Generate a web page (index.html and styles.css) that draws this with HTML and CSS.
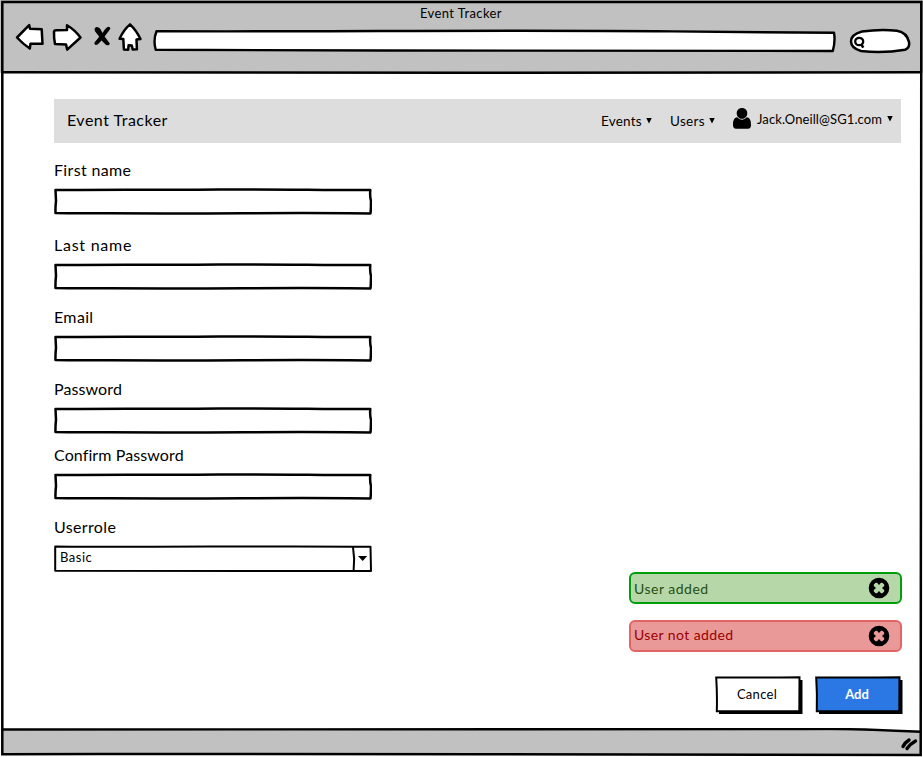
FILE: index.html
```
<!DOCTYPE html>
<html lang="en">
<head>
<meta charset="utf-8">
<title>Event Tracker</title>
<link rel="stylesheet" href="styles.css">
</head>
<body>
<svg class="defs" aria-hidden="true">
  <symbol id="box" viewBox="0 0 318 27">
    <path d="M1.5 2 C60 1.2 110 2 165 1.5 S270 2.2 316.3 2 Q315.7 8 317 13 Q317 20 316.5 25.5 C250 24.4 180 25.6 110 25.4 S40 25.5 1.5 25 Q1.3 19 2 13Z" fill="#fff" stroke="#000" stroke-width="2.5" stroke-linejoin="round"/>
  </symbol>
  <symbol id="close" viewBox="0 0 22 22">
    <path fill="#000" fill-rule="evenodd" d="M11 .7a10.3 10.3 0 1 0 0 20.6a10.3 10.3 0 1 0 0-20.6ZM7.6 5.8 5.8 7.6V9L8 11 5.8 13v1.5l1.8 1.8H9L11 14l2 2.3h1.4l1.8-1.8V13L14 11l2.2-2V7.6l-1.8-1.8H13L11 8 9 5.8Z"/>
  </symbol>
</svg>
<div class="window">
  <header class="chrome">
    <div class="title"><span>Event Tracker</span></div>
    <div class="toolbar">
      <svg class="controls" viewBox="0 0 130 32" width="130" height="32">
        <g fill="#fff" stroke="#000" stroke-width="2.5" stroke-linejoin="round">
          <path d="M2 15.5 14.2 3.2 15 6.8 26.7 7.3 27.5 21.7 15.5 21.7 14.8 26.5Q8 22 2 15.5Z"/>
          <path d="M39 9.5Q39.3 8 42 8.3L52 8V3.2Q60 8 65.5 15.5L52.2 27.7 51 22.4 40 22Q38.8 16 39 9.5Z"/>
          <path d="M115 2.4Q121 8 125.5 17L121.5 17.6 121.9 27.2 117.7 27.6 116.8 23.5 113.6 23.2 113.2 27.8 108.9 27.5 108.3 17 104.6 16.8Q108.5 8 115 2.4Z"/>
        </g>
        <path d="M79.8 6.2Q82 3.5 85 6.5L87.6 11Q91 5 93.5 4.8 96.7 5.5 94.3 8.3L89.6 14.5 94.8 21.4Q94 24.6 90.5 22.4L86.6 18.4 82.6 22.6Q78.7 23.8 79.5 20.5L84.2 14.7 80.2 9.5Q79 7.6 79.8 6.2Z"/>
      </svg>
      <svg class="address" viewBox="0 0 684 26" width="684" height="26">
        <path d="M4.5 3.2C180 4 350 1.5 520 3.4L682 4.8Q683.5 13 680.8 23L230 22.5 3.7 21.8Q1 12 4.5 3.2Z" fill="#fff" stroke="#000" stroke-width="2.4" stroke-linejoin="round"/>
      </svg>
      <svg class="search" viewBox="0 0 62 28" width="62" height="28">
        <path d="M13 4.5Q31 1.8 48 3.7 58 5.5 60 15 61 21 56 22.7 34 26.5 12 24 2 21 2 14.5 2 7.5 13 4.5Z" fill="#fff" stroke="#000" stroke-width="2.5"/>
        <ellipse cx="10.2" cy="14.5" rx="4" ry="3.7" fill="none" stroke="#000" stroke-width="2.3"/>
        <path d="m12 17 2.3 3.6" stroke="#000" stroke-width="2.6"/>
      </svg>
    </div>
  </header>

  <main class="page">
    <nav class="navbar">
      <span class="brand">Event Tracker</span>
      <span class="menu events">Events</span><i class="caret"></i>
      <span class="menu users">Users</span><i class="caret"></i>
      <svg class="person" viewBox="0 0 18 21" width="18" height="21"><path d="M9 0C6 0 3.7 2.2 3.7 5.2S6 10.8 9 10.8s5.3-2.6 5.3-5.6S12 0 9 0ZM4.2 9.3C1 9.6 0 13 0 17q0 3.7 3 3.7h12q3 0 3-3.7c0-4-1-7.4-4.2-7.7C11 12.6 7 12.6 4.2 9.3Z"/></svg>
      <span class="menu account">Jack.Oneill@SG1.com</span><i class="caret raised"></i>
    </nav>
    <div class="content">
      <form class="form">
        <div class="field first"><label><span>First name</span></label><svg class="box"><use href="#box"/></svg></div>
        <div class="field last"><label><span>Last name</span></label><svg class="box"><use href="#box"/></svg></div>
        <div class="field email"><label><span>Email</span></label><svg class="box"><use href="#box"/></svg></div>
        <div class="field password"><label><span>Password</span></label><svg class="box"><use href="#box"/></svg></div>
        <div class="field confirm"><label><span>Confirm Password</span></label><svg class="box"><use href="#box"/></svg></div>
        <div class="field role"><label><span>Userrole</span></label>
          <div class="select">
            <svg class="box" viewBox="0 0 318 27">
              <path d="M1.2 1.4 C100 2.5 200 .8 316.5 1.7L317 26 1.2 25.7Z" fill="#fff" stroke="#000" stroke-width="2" stroke-linejoin="round"/>
              <path d="M299 2Q301 14 299.6 26" fill="none" stroke="#000" stroke-width="2"/>
              <path d="M304 11H313.2L308.7 16Z"/>
            </svg>
            <span class="value">Basic</span>
          </div>
        </div>
      </form>
      <aside class="side">
        <div class="alert success"><span>User added</span><svg width="22" height="22"><use href="#close"/></svg></div>
        <div class="alert error"><span>User not added</span><svg width="22" height="22"><use href="#close"/></svg></div>
        <div class="actions">
          <div class="button cancel">
            <svg viewBox="0 0 88 38"><path d="M4 4H87.5V38H4Z"/><path d="M1.2 1.4Q45 1.8 84.5 1.3L84.3 35 1.8 35.3Q2.3 18 1.2 1.4Z" fill="#fff" stroke="#000" stroke-width="2"/></svg>
            <span>Cancel</span>
          </div>
          <div class="button add">
            <svg viewBox="0 0 88 38"><path d="M4 4H87.5V38H4Z"/><path d="M1.2 1.4Q45 1.8 84.5 1.3L84.3 35 1.8 35.3Q2.3 18 1.2 1.4Z" fill="#2b78e4" stroke="#000" stroke-width="2"/></svg>
            <span>Add</span>
          </div>
        </div>
      </aside>
    </div>
  </main>

  <svg class="status" viewBox="0 0 923 29" width="923" height="29">
    <path d="M2 1.5C250 .5 560 1 720 1L921 3.5V26.5H2Z" fill="#c1c1c1"/>
    <path d="M2 1.5Q250 2.3 520 1.2L830 1Q870 1.2 921 3.8" fill="none" stroke="#000" stroke-width="2.4"/>
    <path d="M903 18.5Q905 14.5 909 12M907 20.5Q910 16 915.5 13" fill="none" stroke="#000" stroke-width="3.4" stroke-linecap="round"/>
  </svg>
  <svg class="frame" viewBox="0 0 923 757" width="923" height="757">
    <path d="M2.3 2H921.3L920.7 755 480 754.3 100 754 2.3 754.3Q1.8 400 2.3 2Z" fill="none" stroke="#000" stroke-width="2.5"/>
    <path d="M2 72.3Q160 73.4 460 72.8T921 72.2" fill="none" stroke="#000" stroke-width="2.5"/>
  </svg>
</div>
</body>
</html>
```
FILE: styles.css
```
* { box-sizing: border-box; }
body {
  margin: 0;
  background: #fff;
  color: #000;
  font-family: Lato, "Liberation Sans", sans-serif;
}
svg { display: block; }
.defs { position: absolute; width: 0; height: 0; }
.window {
  position: relative;
  display: flex;
  flex-direction: column;
  width: 923px;
  height: 757px;
  overflow: hidden;
}
.frame { position: absolute; inset: 0; pointer-events: none; }

.chrome { height: 73px; padding: 4px 0 0 3px; background: #c1c1c1; }
.title { height: 18px; padding-left: 417px; font-size: 13px; line-height: 18px; letter-spacing: .4px; }
.toolbar { display: flex; padding-left: 12px; }
.address { margin: 6px 0 0 7px; }
.search { margin: 5px 0 0 13px; }

.page { flex: 1; display: flex; flex-direction: column; padding: 26px 21px 0 54px; }
.navbar {
  display: flex;
  align-items: center;
  width: 847px;
  height: 44px;
  padding: 0 8px 0 13px;
  background: #ddd;
  white-space: nowrap;
}
.brand { width: 534px; padding-bottom: 3px; font-size: 16px; letter-spacing: .5px; }
.menu { font-size: 13.5px; }
.events { width: 46px; letter-spacing: .2px; }
.users { width: 40px; letter-spacing: .3px; margin-left: 18px; }
.account { width: 130px; font-size: 13px; letter-spacing: .1px; margin-left: 6px; padding-bottom: 4px; }
.person { margin: 0 0 5px 18px; }
.caret {
  width: 6px;
  height: 6px;
  margin: 0 0 1px -1px;
  background: #000;
  clip-path: polygon(0 0, 100% 0, 50% 100%);
}
.raised { margin-bottom: 5px; margin-left: 0; }

.content { flex: 1; display: flex; justify-content: space-between; }
.form { padding-top: 17px; }
.field { width: 318px; margin-bottom: 17px; }
.first { margin-bottom: 20px; }
.password { margin-bottom: 11px; }
.field label { display: block; height: 28px; font-size: 16px; line-height: 20px; letter-spacing: .1px; }
.first label, .email label, .role label { letter-spacing: .35px; }
.last label { letter-spacing: .75px; }
.box { width: 318px; height: 27px; }
.select { position: relative; }
.value { position: absolute; left: 6px; top: 3px; font-size: 13px; line-height: 18px; letter-spacing: .5px; }

.side {
  display: flex;
  flex-direction: column;
  justify-content: flex-end;
  width: 273px;
  padding-bottom: 14px;
}
.alert {
  display: flex;
  justify-content: space-between;
  align-items: center;
  height: 32px;
  margin-bottom: 16px;
  padding: 0 10px 0 3px;
  border: 2px solid;
  border-radius: 6px;
  font-size: 14px;
}
.success { border-color: #009e0f; background: #b6d7a8; color: #274e13; letter-spacing: .5px; }
.error { border-color: #e06666; background: #ea9999; color: #990000; letter-spacing: .4px; margin-bottom: 24px; }
.error span { padding-bottom: 3px; }
.actions { display: flex; justify-content: flex-end; gap: 12px; margin-right: -1px; }
.button { display: grid; width: 88px; height: 38px; font-size: 13px; letter-spacing: .3px; }
.button > * { grid-area: 1 / 1; }
.button span { position: relative; justify-self: center; align-self: center; margin: 0 4px 2px 0; }
.add span { color: #fff; font-weight: 700; letter-spacing: 0; }
```
